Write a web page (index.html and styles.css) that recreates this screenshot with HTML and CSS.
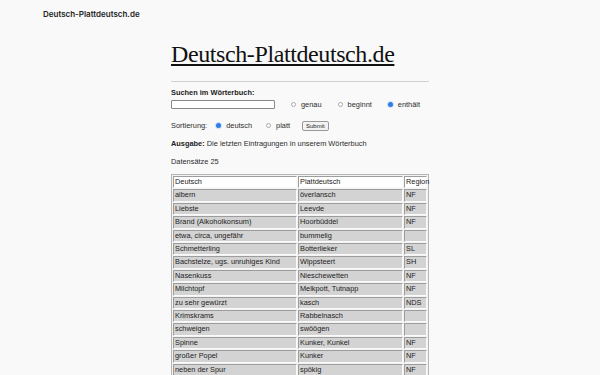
FILE: index.html
```html
<!DOCTYPE html>
<html lang="de">
<head>
<meta charset="utf-8">
<title>Deutsch-Plattdeutsch.de</title>
<link rel="stylesheet" href="styles.css">
</head>
<body>
<header class="topbar">Deutsch-Plattdeutsch.de</header>
<main class="page">
  <h1 class="title"><a href="#">Deutsch-Plattdeutsch.de</a></h1>
  <hr class="rule">
  <form class="search">
    <label class="search-label" for="q">Suchen im Wörterbuch:</label>
    <div class="row row-search">
      <input class="text-input" id="q" type="text">
      <label class="opt"><span class="radio"></span>genau</label>
      <label class="opt"><span class="radio"></span>beginnt</label>
      <label class="opt"><span class="radio checked"></span>enthält</label>
    </div>
    <div class="row row-sort">
      <span class="sort-label">Sortierung:</span>
      <label class="opt"><span class="radio checked"></span>deutsch</label>
      <label class="opt"><span class="radio"></span>platt</label>
      <button class="submit" type="button">Submit</button>
    </div>
  </form>
  <p class="info"><b>Ausgabe:</b> Die letzten Eintragungen in unserem Wörterbuch</p>
  <p class="info count">Datensätze 25</p>
  <table class="words">
    <colgroup><col class="c1"><col class="c2"><col class="c3"></colgroup>
    <tr class="head"><td>Deutsch</td><td>Plattdeutsch</td><td>Region</td></tr>
    <tr><td>albern</td><td>överlansch</td><td>NF</td></tr>
    <tr><td>Liebste</td><td>Leevde</td><td>NF</td></tr>
    <tr><td>Brand (Alkoholkonsum)</td><td>Hoorbüddel</td><td>NF</td></tr>
    <tr><td>etwa, circa, ungefähr</td><td>bummelig</td><td></td></tr>
    <tr><td>Schmetterling</td><td>Botterlieker</td><td>SL</td></tr>
    <tr><td>Bachstelze, ugs. unruhiges Kind</td><td>Wippsteert</td><td>SH</td></tr>
    <tr><td>Nasenkuss</td><td>Nieschewetten</td><td>NF</td></tr>
    <tr><td>Milchtopf</td><td>Melkpott, Tutnapp</td><td>NF</td></tr>
    <tr><td>zu sehr gewürzt</td><td>kasch</td><td>NDS</td></tr>
    <tr><td>Krimskrams</td><td>Rabbelnasch</td><td></td></tr>
    <tr><td>schweigen</td><td>swöögen</td><td></td></tr>
    <tr><td>Spinne</td><td>Kunker, Kunkel</td><td>NF</td></tr>
    <tr><td>großer Popel</td><td>Kunker</td><td>NF</td></tr>
    <tr><td>neben der Spur</td><td>spökig</td><td>NF</td></tr>
  </table>
</main>
</body>
</html>
```
FILE: styles.css
```css
html, body {
  margin: 0;
  padding: 0;
  background: #f9f9f9;
  color: #222;
  font-family: "Liberation Sans", Arial, sans-serif;
  font-size: 7.4px;
}
.topbar {
  padding: 9px 0 0 43px;
  height: 20px;
  box-sizing: border-box;
  font-family: Inter, "Liberation Sans", sans-serif;
  font-weight: 600;
  font-size: 8px;
  line-height: 11px;
  color: #222;
}
.page {
  width: 258px;
  margin: 0 auto;
}
.title {
  margin: 20px 0 0;
  font-family: "Liberation Serif", "DejaVu Serif", serif;
  font-weight: 400;
  font-size: 24px;
  line-height: 29px;
  letter-spacing: -0.4px;
}
.title a {
  color: #111;
  text-decoration: underline;
  text-decoration-thickness: 1.6px;
  text-underline-offset: 2px;
}
.rule {
  margin: 12px 0 0;
  border: 0;
  border-top: 1px solid #cfcfcf;
  height: 0;
}
.search {
  margin-top: 6px;
}
.search-label {
  display: block;
  font-weight: 700;
  line-height: 10px;
}
.row {
  display: flex;
  align-items: center;
}
.row-search {
  height: 10px;
  margin-top: 1px;
}
.text-input {
  width: 104px;
  height: 9px;
  box-sizing: border-box;
  border: 1px solid #888;
  border-radius: 1px;
  background: #fff;
  padding: 0;
  margin: 0 12px 0 0;
}
.opt {
  display: flex;
  align-items: center;
  gap: 5px;
  margin-right: 12px;
  color: #2b2b2b;
}
.radio {
  width: 5px;
  height: 5px;
  border-radius: 50%;
  border: 0.5px solid #aaa;
  background: #fff;
  box-sizing: border-box;
  margin-left: 4px;
}
.radio.checked {
  border: 0;
  background: #2f7be8;
  box-shadow: 0 0 0 1px #d3e3fb;
}
.row-sort {
  margin-top: 11px;
  height: 11px;
}
.sort-label {
  margin-right: 5px;
  color: #2b2b2b;
}
.row-sort .opt {
  margin-right: 8px;
}
.row-sort .opt + .opt {
  margin-left: 2px;
  margin-right: 7px;
}
.submit {
  font-family: "Liberation Sans", Arial, sans-serif;
  font-size: 6px;
  line-height: 8px;
  padding: 0 3px;
  height: 10px;
  border: 1px solid #999;
  border-radius: 2px;
  background: #f2f2f2;
  color: #222;
  margin-left: 5px;
}
.info {
  margin: 8px 0 0;
  line-height: 10px;
  color: #2b2b2b;
}
.info b {
  color: #222;
}
.count {
  margin-top: 8px;
}
.words {
  margin-top: 7px;
  width: 258px;
  border: 1px solid #b5b5b5;
  border-spacing: 1px;
  background: #f3f3f3;
  table-layout: fixed;
}
.c1 { width: 124px; }
.c2 { width: 105px; }
.c3 { width: 23px; }
.words td {
  border: 1px solid #9d9d9d;
  border-right-color: #fafafa;
  border-bottom-color: #fafafa;
  background: #d3d3d3;
  padding: 0 0 0 1px;
  height: 10.4px;
  line-height: 10.4px;
  font-size: 7.35px;
  color: #222;
  white-space: nowrap;
}
.words .head td {
  background: #fff;
}
```
